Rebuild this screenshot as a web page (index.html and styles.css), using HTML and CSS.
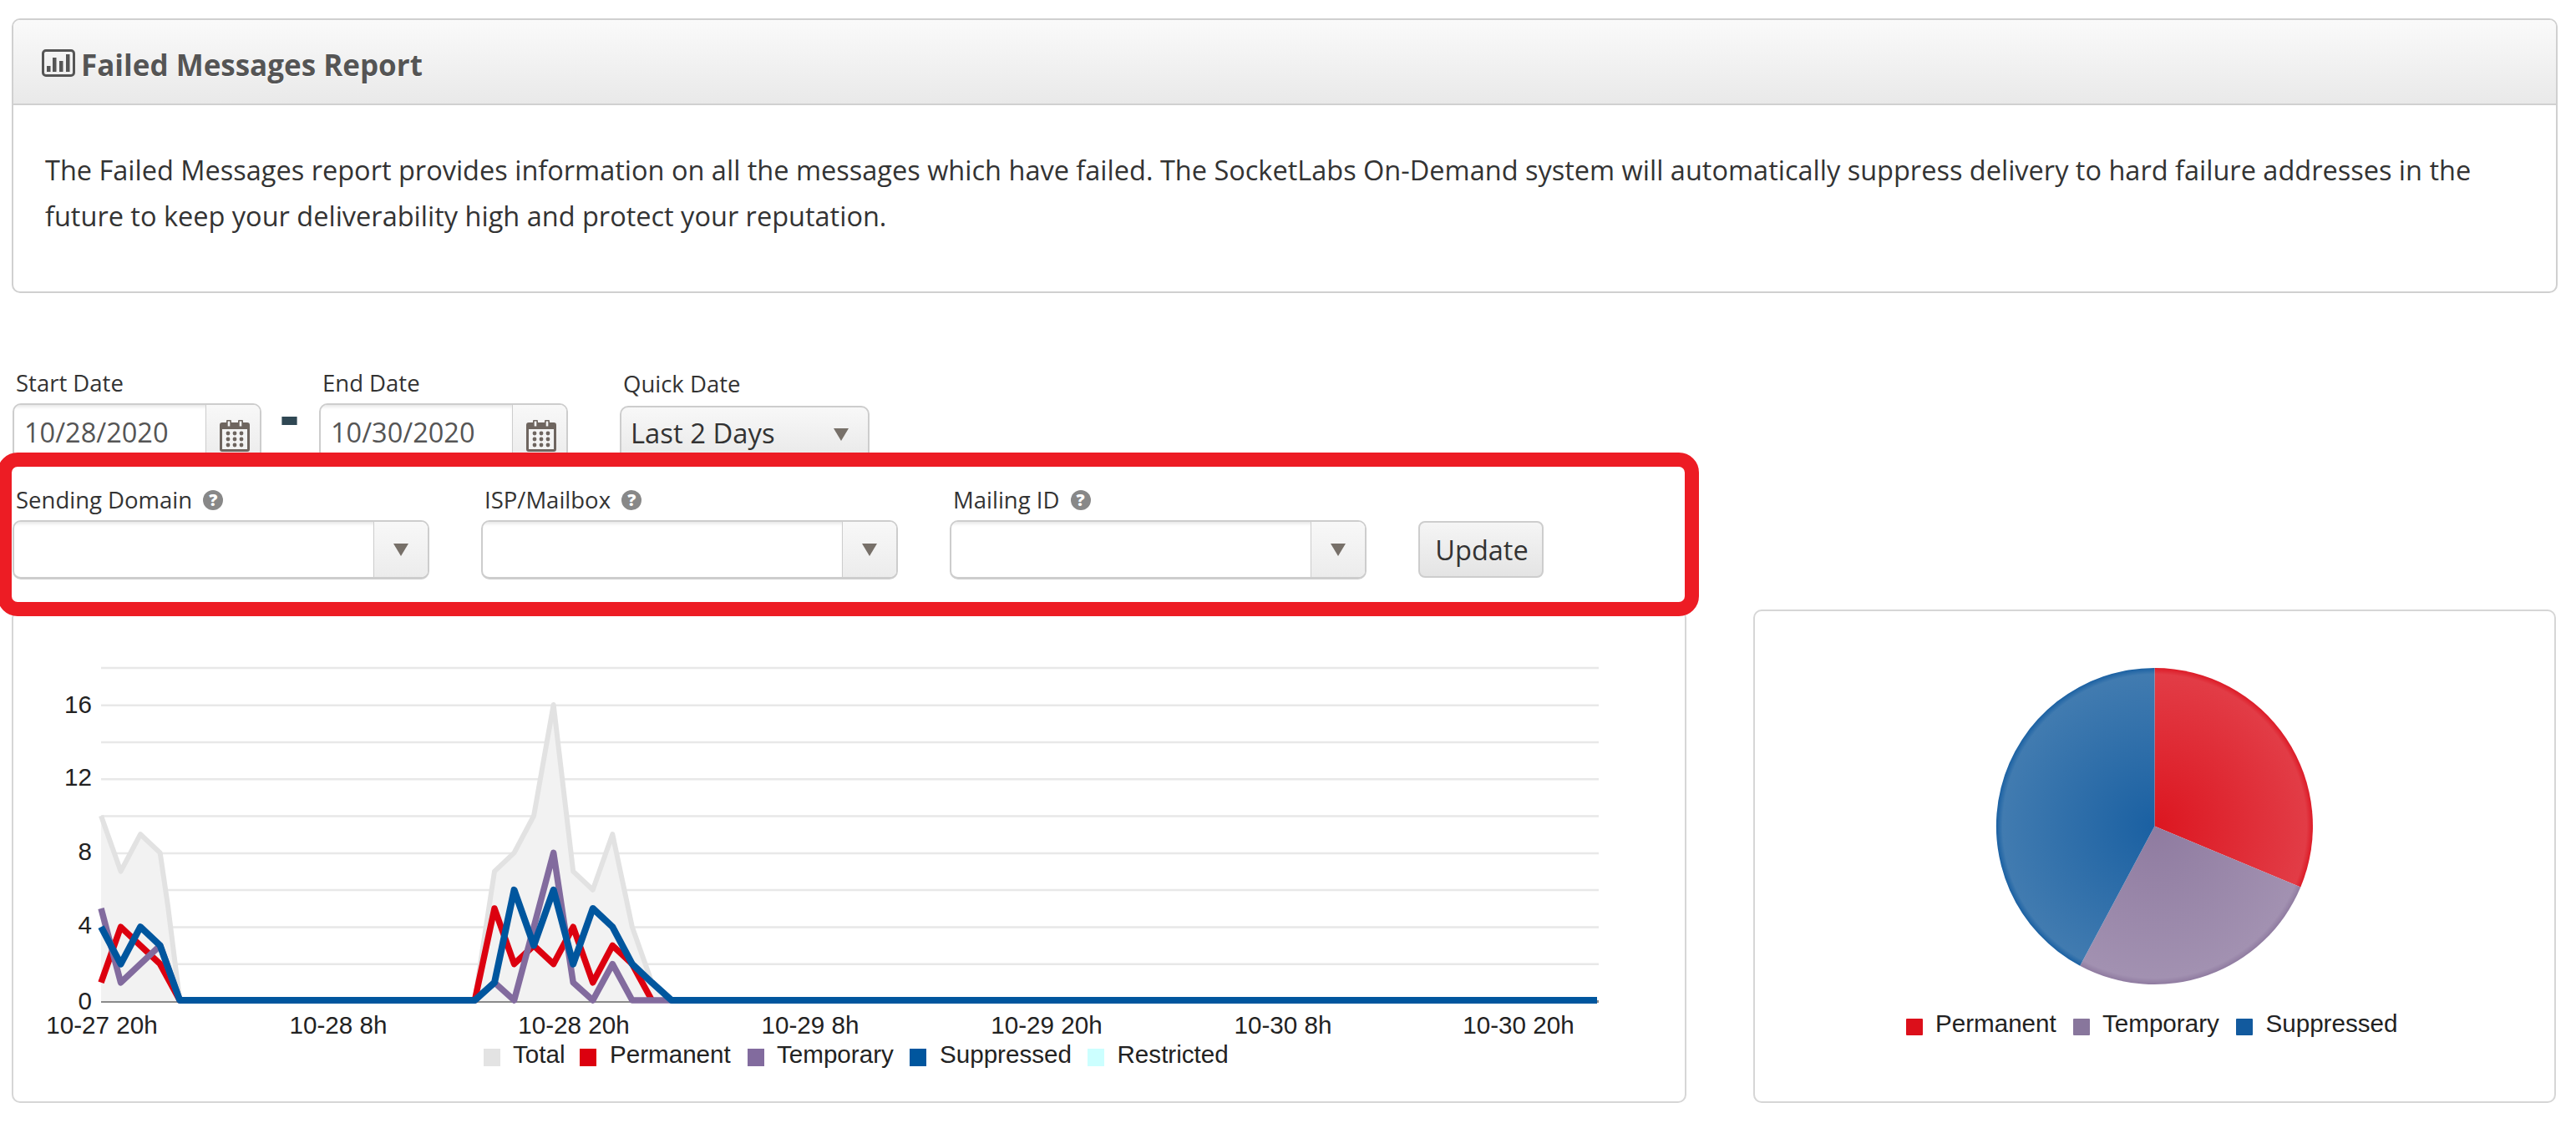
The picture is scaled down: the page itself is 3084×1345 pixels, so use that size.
FILE: index.html
```html
<!DOCTYPE html>
<html lang="en">
<head>
<meta charset="utf-8">
<title>Failed Messages Report</title>
<link rel="stylesheet" href="styles.css">
</head>
<body>
<svg class="defs" width="0" height="0" aria-hidden="true">
  <symbol id="cal" viewBox="0 0 36 38">
    <path fill="#6e655f" d="M3 3h5v-1a3 3 0 0 1 6 0v1h8v-1a3 3 0 0 1 6 0v1h5a3 3 0 0 1 3 3v29a3 3 0 0 1-3 3H3a3 3 0 0 1-3-3V6a3 3 0 0 1 3-3z"/>
    <rect x="3" y="11" width="30" height="24" fill="#f3f3f3"/>
    <rect x="9.7" y="1.5" width="2.6" height="6" fill="#f3f3f3"/>
    <rect x="23.700" y="1.500" width="2.600" height="6" fill="#f3f3f3"/>
    <g fill="#6e655f">
      <circle cx="10" cy="16" r="2.400"/><circle cx="18" cy="16" r="2.400"/><circle cx="26" cy="16" r="2.400"/>
      <circle cx="10" cy="23" r="2.400"/><circle cx="18" cy="23" r="2.400"/><circle cx="26" cy="23" r="2.400"/>
      <circle cx="10" cy="30" r="2.400"/><circle cx="18" cy="30" r="2.400"/><circle cx="26" cy="30" r="2.400"/>
    </g>
  </symbol>
  <symbol id="tri" viewBox="0 0 18 15"><path fill="#777069" d="M0 0h18L9 15z"/></symbol>
</svg>

<section class="panel">
  <header class="panel-head">
    <svg class="chart-icon" viewBox="0 0 40 33" aria-hidden="true">
      <rect x="1.500" y="1.500" width="37" height="30" rx="3.500" fill="none" stroke="#555" stroke-width="3"/>
      <path fill="#555" d="M6 20h4.500v7H6zM13 10h4.500v17H13zM21 14h4.500v13H21zM29 6h4.500v21H29z"/>
    </svg>
    <h1>Failed Messages Report</h1>
  </header>
  <div class="panel-body">
    <p>The Failed Messages report provides information on all the messages which have failed. The SocketLabs On-Demand system will automatically suppress delivery to hard failure addresses in the future to keep your deliverability high and protect your reputation.</p>
  </div>
</section>

<form class="date-row">
  <div class="field">
    <label>Start Date</label>
    <div class="date-input"><span class="value">10/28/2020</span><span class="addon"><svg class="cal"><use href="#cal"/></svg></span></div>
  </div>
  <span class="dash">-</span>
  <div class="field end-field">
    <label>End Date</label>
    <div class="date-input"><span class="value">10/30/2020</span><span class="addon"><svg class="cal"><use href="#cal"/></svg></span></div>
  </div>
  <div class="field quick-field">
    <label>Quick Date</label>
    <div class="quick-select"><span>Last 2 Days</span><svg class="tri"><use href="#tri"/></svg></div>
  </div>
</form>

<div class="filter-box">
  <div class="field combo-field">
    <label>Sending Domain <i class="help">?</i></label>
    <div class="combo"><span class="combo-text"></span><span class="combo-btn"><svg class="tri"><use href="#tri"/></svg></span></div>
  </div>
  <div class="field combo-field">
    <label>ISP/Mailbox <i class="help">?</i></label>
    <div class="combo"><span class="combo-text"></span><span class="combo-btn"><svg class="tri"><use href="#tri"/></svg></span></div>
  </div>
  <div class="field combo-field">
    <label>Mailing ID <i class="help">?</i></label>
    <div class="combo"><span class="combo-text"></span><span class="combo-btn"><svg class="tri"><use href="#tri"/></svg></span></div>
  </div>
  <button class="update" type="button">Update</button>
</div>

<div class="charts">
  <div class="card line-card">
    <svg class="plot" viewBox="16 732 2001 587" width="2001" height="587">
      <g class="grid">
        <path d="M121 800H1914M121 844.800H1914M121 889H1914M121 933.200H1914M121 977.400H1914M121 1022H1914M121 1066H1914M121 1110.500H1914M121 1154.700H1914"/>
      </g>
      <path class="axis" d="M121 1199.500H1914"/>
      <path class="area" d="M121 1199V977L144.550 1043.600L168.100 999.200L191.650 1021.400L201 1085L215.200 1199H568.450L592 1043.600L615.550 1021.400L639.100 977L662.650 844L686.200 1043.600L709.750 1065.800L733.300 999.200L756.850 1110.200L780.400 1176.800L803.950 1199Z"/>
      <path class="s-total" d="M121 977L144.550 1043.600L168.100 999.200L191.650 1021.400L201 1085L215.200 1198H568.450L592 1043.600L615.550 1021.400L639.100 977L662.650 844L686.200 1043.600L709.750 1065.800L733.300 999.200L756.850 1110.200L780.400 1176.800L803.950 1198"/>
      <path class="s-perm" d="M121 1176.800L144.550 1110.200L168.100 1132.400L191.650 1154.600L215.200 1198H568.450L592 1088L615.550 1154.600L639.100 1132.400L662.650 1154.600L686.200 1110.200L709.750 1176.800L733.300 1132.400L756.850 1154.600L780.400 1198"/>
      <path class="s-temp" d="M121 1088L144.550 1176.800L168.100 1154.600L191.650 1132.400L215.200 1198H568.450L592 1176.800L615.550 1198L639.100 1110.200L662.650 1021.400L686.200 1176.800L709.750 1198L733.300 1154.600L756.850 1198H1912"/>
      <path class="s-supp" d="M121 1110.200L144.550 1154.600L168.100 1110.200L191.650 1132.400L215.200 1198H568.450L592 1176.800L615.550 1065.800L639.100 1132.400L662.650 1065.800L686.200 1154.600L709.750 1088L733.300 1110.200L756.850 1154.600L780.400 1176.800L803.950 1198H1912"/>
      <g class="chart-text y-labels">
        <text x="110" y="854">16</text><text x="110" y="941">12</text><text x="110" y="1030">8</text><text x="110" y="1118">4</text><text x="110" y="1209">0</text>
      </g>
      <g class="chart-text x-labels">
        <text x="122" y="1238">10-27 20h</text><text x="405" y="1238">10-28 8h</text><text x="687" y="1238">10-28 20h</text><text x="970" y="1238">10-29 8h</text><text x="1253" y="1238">10-29 20h</text><text x="1536" y="1238">10-30 8h</text><text x="1818" y="1238">10-30 20h</text>
      </g>
      <g class="chart-text">
        <rect x="579" y="1256" width="20" height="21" fill="#e3e3e3"/><text x="614" y="1273">Total</text>
        <rect x="694" y="1256" width="20" height="21" fill="#dc000f"/><text x="730" y="1273">Permanent</text>
        <rect x="895" y="1256" width="20" height="21" fill="#826b9e"/><text x="930" y="1273">Temporary</text>
        <rect x="1089" y="1256" width="20" height="21" fill="#00569e"/><text x="1125" y="1273">Suppressed</text>
        <rect x="1302" y="1256" width="20" height="21" fill="#ccffff"/><text x="1337.500" y="1273">Restricted</text>
      </g>
    </svg>
  </div>
  <div class="card pie-card">
    <svg class="plot" viewBox="2101 732 957 587" width="957" height="587">
      <defs>
        <radialGradient id="gr" gradientUnits="userSpaceOnUse" cx="2579.500" cy="989.500" r="189.500">
          <stop offset="0" stop-color="#dc1620"/><stop offset=".96" stop-color="#e23c46"/><stop offset="1" stop-color="#dc1a26"/>
        </radialGradient>
        <radialGradient id="gp" gradientUnits="userSpaceOnUse" cx="2579.500" cy="989.500" r="189.500">
          <stop offset="0" stop-color="#8f7ba0"/><stop offset=".96" stop-color="#a291b1"/><stop offset="1" stop-color="#8f7ba0"/>
        </radialGradient>
        <radialGradient id="gb" gradientUnits="userSpaceOnUse" cx="2579.500" cy="989.500" r="189.500">
          <stop offset="0" stop-color="#1a60a2"/><stop offset=".96" stop-color="#417bb0"/><stop offset="1" stop-color="#1a60a2"/>
        </radialGradient>
      </defs>
      <path fill="url(#gr)" d="M2579.500 989.500V800A189.500 189.500 0 0 1 2754.300 1062.600Z"/>
      <path fill="url(#gp)" d="M2579.500 989.500L2754.300 1062.600A189.500 189.500 0 0 1 2490.200 1156.700Z"/>
      <path fill="url(#gb)" d="M2579.500 989.500L2490.200 1156.700A189.500 189.500 0 0 1 2579.500 800Z"/>
      <g class="chart-text">
        <rect x="2282" y="1220" width="20" height="20" rx="1" fill="#dc0f1a"/><text x="2317" y="1236">Permanent</text>
        <rect x="2482" y="1220" width="20" height="20" rx="1" fill="#88769c"/><text x="2517" y="1236">Temporary</text>
        <rect x="2677" y="1220" width="20" height="20" rx="1" fill="#125a9e"/><text x="2712.500" y="1236">Suppressed</text>
      </g>
    </svg>
  </div>
</div>
</body>
</html>
```

FILE: styles.css
```css
* { box-sizing: border-box; }
html, body { margin: 0; height: 100%; background: #fff; overflow: hidden; }
body {
  padding: 22px 22px 0 14px;
  font-family: "Open Sans", sans-serif;
  color: #333;
}
.defs { position: absolute; }

.panel {
  border: 2px solid #d0d0d0;
  border-radius: 10px;
  height: 329px;
  overflow: hidden;
}
.panel-head {
  display: flex;
  align-items: center;
  gap: 7px;
  height: 102px;
  padding: 0 0 0 34px;
  background: linear-gradient(#fafafa, #e9e9e9);
  border-bottom: 2px solid #d0d0d0;
}
.chart-icon { width: 40px; height: 33px; flex: none; margin-top: 2px; }
.panel-head h1 {
  margin: 7px 0 0;
  font-size: 35px;
  line-height: 48px;
  font-weight: 700;
  color: #555;
  text-shadow: 0 1px 1px #fff;
}
.panel-body { padding: 50px 40px 0 38px; }
.panel-body p {
  margin: 0;
  font-size: 32.500px;
  line-height: 55px;
  color: #333;
}

.date-row {
  display: flex;
  align-items: flex-start;
  height: 191px;
  padding: 89px 0 0 1px;
}
.field { display: flex; flex-direction: column; }
.field label {
  display: flex;
  align-items: center;
  height: 37px;
  margin-bottom: 6px;
  padding-left: 4px;
  font-size: 27.500px;
  color: #333;
  white-space: pre;
}
.date-input {
  display: flex;
  width: 298px;
  height: 68px;
  border: 2px solid #cdcdcd;
  border-radius: 10px;
  overflow: hidden;
}
.value {
  flex: 1;
  padding: 5px 0 0 12px;
  font-size: 32.500px;
  line-height: 56px;
  color: #555;
  box-shadow: inset 0 4px 4px -2px #e4e4e4;
}
.addon {
  display: flex;
  justify-content: center;
  flex: none;
  width: 65px;
  padding: 18px 0 0 3px;
  background: linear-gradient(#f8f8f8, #ececec);
  border-left: 1px solid #cdcdcd;
}
.cal { width: 36px; height: 38px; }
.dash {
  width: 69px;
  padding-left: 23px;
  font-size: 66px;
  line-height: 112px;
  font-weight: 800;
  color: #2f4753;
}
.end-field { margin-right: 62px; }
.quick-field { padding-top: 1px; }
.quick-field label { margin-bottom: 8px; }
.quick-select {
  display: flex;
  align-items: center;
  justify-content: space-between;
  width: 299px;
  height: 68px;
  padding: 0 23px 0 11px;
  font-size: 32.800px;
  color: #333;
  border: 2px solid #cdcdcd;
  border-radius: 10px;
  background: linear-gradient(#f8f8f8, #e8e8e8);
}
.quick-select span { margin-top: -3px; }
.tri { width: 18px; height: 15px; flex: none; }

.filter-box {
  position: relative;
  z-index: 1;
  display: flex;
  align-items: flex-start;
  gap: 62px;
  width: 2037px;
  height: 196px;
  margin-left: -17px;
  padding: 21px 0 0 1px;
  background: #fff;
  border: 17px solid #ed1c24;
  border-radius: 24px;
}
.combo-field { width: 499px; }
.help {
  display: inline-flex;
  align-items: center;
  justify-content: center;
  width: 24px;
  height: 24px;
  margin-left: 6px;
  border-radius: 50%;
  background: #888;
  color: #fff;
  font-size: 20px;
  font-weight: 800;
  font-style: normal;
  line-height: 1;
}
.combo {
  display: flex;
  height: 71px;
  border: 2px solid #cdcdcd;
  border-bottom-width: 3px;
  border-radius: 10px;
  overflow: hidden;
}
.combo-text { flex: 1; box-shadow: inset 0 4px 4px -2px #e4e4e4; }
.combo-btn {
  display: flex;
  align-items: center;
  justify-content: center;
  flex: none;
  width: 65px;
  background: linear-gradient(#f8f8f8, #ececec);
  border-left: 1px solid #cdcdcd;
}
.update {
  width: 150px;
  height: 68px;
  margin-top: 44px;
  padding: 0 0 0 2px;
  font-family: inherit;
  font-size: 32.500px;
  color: #333;
  border: 2px solid #cdcdcd;
  border-radius: 8px;
  background: linear-gradient(#f5f5f5, #e4e4e4);
}

.charts {
  display: flex;
  justify-content: space-between;
  margin-top: -8px;
  padding-right: 2px;
}
.card {
  height: 591px;
  border: 2px solid #d6d6d6;
  border-radius: 10px;
}
.line-card { width: 2005px; }
.pie-card { width: 961px; }
.plot { display: block; }
.grid path { fill: none; stroke: #e8e8e8; stroke-width: 2.500; }
.axis { fill: none; stroke: #8a8a8a; stroke-width: 3; }
.area { fill: #f2f2f2; }
.s-total, .s-perm, .s-temp, .s-supp {
  fill: none;
  stroke-width: 7.500;
  stroke-linejoin: round;
  stroke-linecap: butt;
}
.s-total { stroke: #e2e2e2; stroke-width: 6; }
.s-perm { stroke: #dc000f; }
.s-temp { stroke: #826b9e; stroke-width: 7.500; }
.s-supp { stroke: #00569e; stroke-width: 8; }
.chart-text text {
  font-family: "Liberation Sans", Arial, sans-serif;
  font-size: 29.600px;
  fill: #222;
}
.y-labels text { text-anchor: end; }
.x-labels text { text-anchor: middle; }
```
